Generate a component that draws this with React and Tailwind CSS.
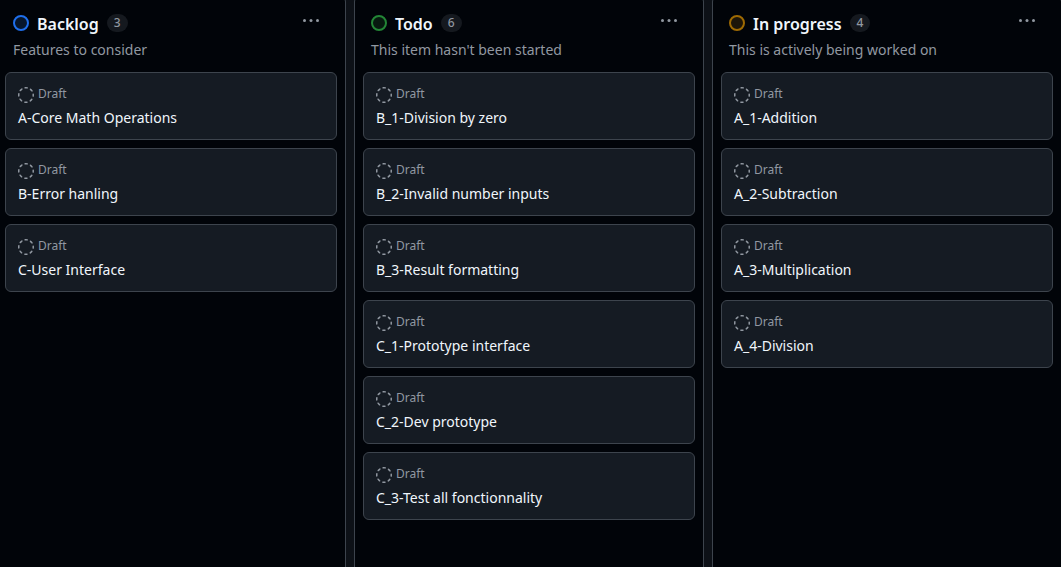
const columns = [
  {
    title: "Backlog",
    description: "Features to consider",
    dot: "border-[#1f6feb] bg-[#07162b]",
    items: ["A-Core Math Operations", "B-Error hanling", "C-User Interface"],
  },
  {
    title: "Todo",
    description: "This item hasn't been started",
    dot: "border-[#238636] bg-[#07190f]",
    items: [
      "B_1-Division by zero",
      "B_2-Invalid number inputs",
      "B_3-Result formatting",
      "C_1-Prototype interface",
      "C_2-Dev prototype",
      "C_3-Test all fonctionnality",
    ],
  },
  {
    title: "In progress",
    description: "This is actively being worked on",
    dot: "border-[#9e6a03] bg-[#1c1509]",
    items: ["A_1-Addition", "A_2-Subtraction", "A_3-Multiplication", "A_4-Division"],
  },
];

function DraftIcon() {
  return (
    <svg viewBox="0 0 16 16" className="size-4 shrink-0" fill="none" aria-hidden="true">
      <circle
        cx="8"
        cy="8"
        r="7.25"
        stroke="currentColor"
        strokeWidth="1.5"
        strokeLinecap="round"
        strokeDasharray="2.2 3.494"
        strokeDashoffset="1.1"
      />
    </svg>
  );
}

function KebabIcon() {
  return (
    <svg viewBox="0 0 16 16" className="size-4" fill="currentColor" aria-hidden="true">
      <circle cx="1.5" cy="7.5" r="1.5" />
      <circle cx="8" cy="7.5" r="1.5" />
      <circle cx="14.5" cy="7.5" r="1.5" />
    </svg>
  );
}

function Card({ title }) {
  return (
    <li className="rounded-md border border-[#3d444d] bg-[#151b23] px-3 py-[11px]">
      <div className="flex h-6 gap-1 text-xs leading-5 text-[#9198a1]">
        <span className="pt-[3px]">
          <DraftIcon />
        </span>
        <span>Draft</span>
      </div>
      <a href="#" className="block text-sm leading-5 text-[#f0f6fc]">
        {title}
      </a>
    </li>
  );
}

function Column({ column }) {
  return (
    <section className="min-w-0 rounded-t-md border border-b-0 border-[#3d444d] bg-[#010409]">
      <header className="pt-[10px] pr-[18px] pl-4">
        <div className="flex h-8 items-center">
          <span className={`size-4 shrink-0 rounded-full border-2 ${column.dot}`} />
          <h2 className="ml-2 pt-0.5 text-base font-semibold text-[#f0f6fc]">{column.title}</h2>
          <span className="ml-2 rounded-full bg-[#15191f] px-[7px] text-xs leading-[18px] font-medium text-[#9198a1]">
            {column.items.length}
          </span>
          <button
            type="button"
            aria-label={`More actions for ${column.title}`}
            className="ml-auto flex h-7 w-8 items-center justify-center self-start rounded-md text-[#9198a1]"
          >
            <KebabIcon />
          </button>
        </div>
        <p className="mt-px text-sm leading-5 text-[#9198a1]">{column.description}</p>
      </header>
      <ul className="mt-3 flex flex-col gap-2 px-2">
        {column.items.map((item) => (
          <Card key={item} title={item} />
        ))}
      </ul>
    </section>
  );
}

export default function App() {
  return (
    <main className="flex min-h-screen overflow-hidden bg-[#0d1117] font-['Noto_Sans',sans-serif]">
      <div className="-mt-1 -mr-px -ml-1 grid flex-1 grid-cols-3 gap-2">
        {columns.map((column) => (
          <Column key={column.title} column={column} />
        ))}
      </div>
    </main>
  );
}
